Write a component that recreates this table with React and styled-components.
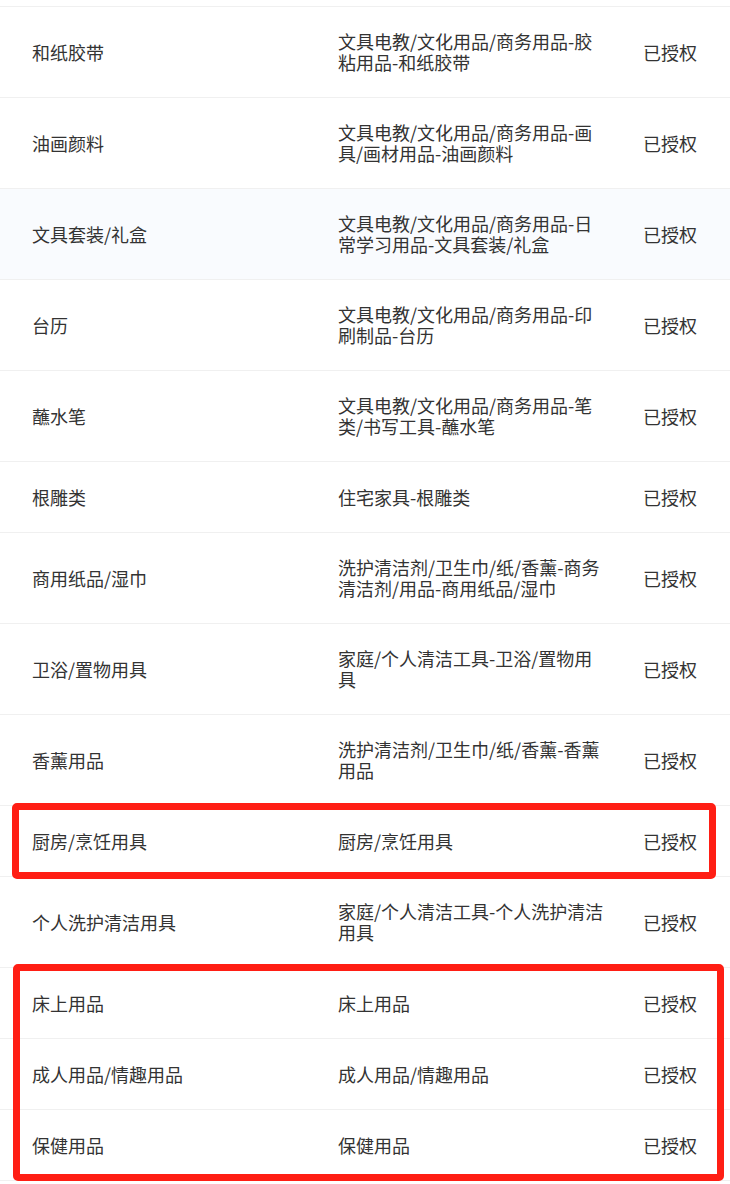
import React from "react";
import styled, { createGlobalStyle } from "styled-components";

const GlobalStyle = createGlobalStyle`
  html, body {
    margin: 0;
    padding: 0;
    background: #fff;
  }
  body {
    font-family: "Noto Sans CJK SC", "Noto Sans", sans-serif;
    color: #333;
  }
`;

const Page = styled.div`
  padding-top: 6px;
  width: 730px;
`;

const Table = styled.div`
  border-top: 1px solid #f0f0f0;
`;

const Group = styled.div`
  position: relative;
  &::after {
    content: "";
    position: absolute;
    top: ${(p) => p.$top}px;
    bottom: ${(p) => p.$bottom}px;
    left: ${(p) => p.$left}px;
    right: ${(p) => p.$right}px;
    border: 7px solid #ff1e14;
    border-radius: 5px;
    pointer-events: none;
  }
`;

const Row = styled.div`
  display: grid;
  grid-template-columns: 306px 305px 1fr;
  align-items: center;
  min-height: 71px;
  box-sizing: border-box;
  border-bottom: 1px solid #f0f0f0;
  background: ${(p) => (p.$hover ? "#f9fbfe" : "#fff")};
`;

const Cell = styled.div`
  padding: 24px ${(p) => (p.$wide ? "5px" : "16px")} 24px 32px;
  font-size: 18px;
  line-height: 21px;
  color: #333;
  word-break: break-all;
`;

const rows = [
  ["和纸胶带", "文具电教/文化用品/商务用品-胶粘用品-和纸胶带"],
  ["油画颜料", "文具电教/文化用品/商务用品-画具/画材用品-油画颜料"],
  ["文具套装/礼盒", "文具电教/文化用品/商务用品-日常学习用品-文具套装/礼盒", true],
  ["台历", "文具电教/文化用品/商务用品-印刷制品-台历"],
  ["蘸水笔", "文具电教/文化用品/商务用品-笔类/书写工具-蘸水笔"],
  ["根雕类", "住宅家具-根雕类"],
  ["商用纸品/湿巾", "洗护清洁剂/卫生巾/纸/香薰-商务清洁剂/用品-商用纸品/湿巾"],
  ["卫浴/置物用具", "家庭/个人清洁工具-卫浴/置物用具"],
  ["香薰用品", "洗护清洁剂/卫生巾/纸/香薰-香薰用品"],
];

const kitchen = [["厨房/烹饪用具", "厨房/烹饪用具"]];
const personal = [["个人洗护清洁用具", "家庭/个人清洁工具-个人洗护清洁用具"]];
const bedding = [
  ["床上用品", "床上用品"],
  ["成人用品/情趣用品", "成人用品/情趣用品"],
  ["保健用品", "保健用品"],
];

function renderRows(list) {
  return list.map(([name, path, hover]) => (
    <Row key={name} $hover={hover}>
      <Cell>{name}</Cell>
      <Cell $wide>{path}</Cell>
      <Cell>已授权</Cell>
    </Row>
  ));
}

export default function App() {
  return (
    <Page>
      <GlobalStyle />
      <Table>
        {renderRows(rows)}
        <Group $top={-3} $bottom={-2} $left={12} $right={14}>
          {renderRows(kitchen)}
        </Group>
        {renderRows(personal)}
        <Group $top={-4} $bottom={0} $left={13} $right={6}>
          {renderRows(bedding)}
        </Group>
      </Table>
    </Page>
  );
}
